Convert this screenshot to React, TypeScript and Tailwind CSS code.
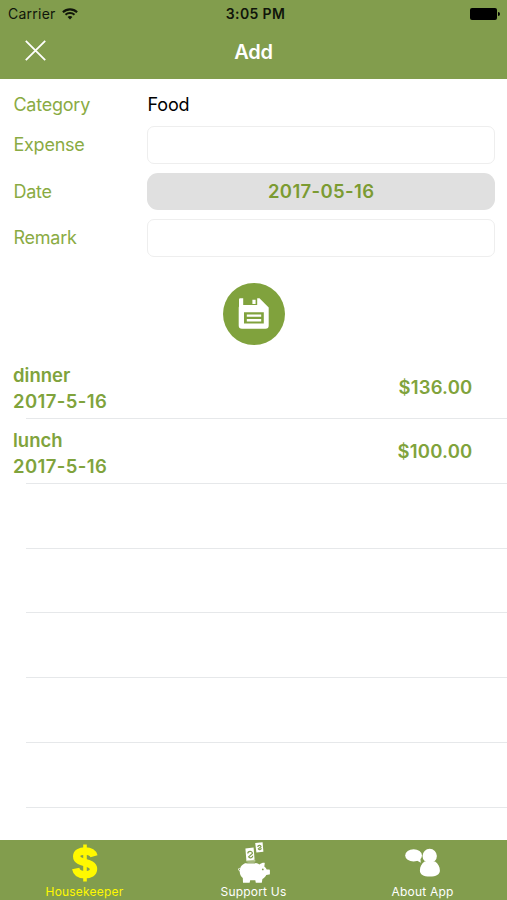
import React from "react";

type Entry = { name: string; date: string; amount: string };

const entries: (Entry | null)[] = [
  { name: "dinner", date: "2017-5-16", amount: "$136.00" },
  { name: "lunch", date: "2017-5-16", amount: "$100.00" },
  null,
  null,
  null,
  null,
  null,
];

function WifiIcon() {
  return (
    <svg className="ml-[6px] h-[12px] w-[16px]" viewBox="0 0 16 12" fill="none" stroke="#10150a">
      <path d="M.9 4.2C4.8.4 11.2.4 15.1 4.2" strokeWidth="2.1" />
      <path d="M3.5 6.8c2.5-2.3 6.5-2.3 9 0" strokeWidth="2" />
      <path d="M5.6 9c1.3-1.2 3.5-1.2 4.8 0L8 11.5z" fill="#10150a" stroke="none" />
    </svg>
  );
}

function SaveIcon() {
  return (
    <svg className="h-[31px] w-[31px]" viewBox="0 0 31 31">
      <path
        fill="#fff"
        fillRule="evenodd"
        d="M2.2.3H5.2V7h14V.3h2.3L30.7 9.5V27.5Q30.7 30.7 27.5 30.7H4Q.7 30.7.7 27.5V9.5L1 8.5V1.5Q1 .3 2.2.3z M6 14.2h19.8v11.2H6z"
      />
      <path fill="#fff" d="M14.4 1.8h3.2v4.1h-3.2zM8.8 16.5h14.4v2.3H8.8zM8.8 21.1h14.4v2.3H8.8z" />
    </svg>
  );
}

function DollarIcon() {
  return (
    <svg className="mt-[2px] h-[38px] w-[26px]" viewBox="0 0 26 38" fill="none" stroke="#fff900">
      <path d="M13 .5v37" strokeWidth="3.6" />
      <path
        d="M22 12.2C21 8.7 17.7 7 13 7 8 7 4.7 8.8 4.7 12.2c0 8.3 16.8 4.5 16.8 12.8 0 3.8-3.5 5.8-8.5 5.8-5.3 0-8.5-2-9.3-6.3"
        strokeWidth="7.4"
      />
    </svg>
  );
}

function PiggyIcon() {
  return (
    <svg className="mt-[1px] h-[41px] w-[32px]" viewBox="0 0 32 41">
      <g fill="#fff">
        <path d="M7.4 6.6 15.6 5.4l1 12.4-8.2 1zM17.2.9 24.6.3l.8 9.4-7 .8z" />
        <path d="M1.8 28.5C2.2 23 6.4 20.6 12.5 20.6c3.9 0 6.7.5 8.9 1.9 1.7-1.3 3.4-1.8 5.4-1.6l-.5 3.5c1.3 1 2 2 2.4 3.2h2.4q.8 0 .8.9v3.2q0 .8-.8.9l-2.8.5c-.9 1.9-2.2 3-3.9 3.8l-.6 3.9h-6l-.5-2.6h-5.1L11.6 40.8H5l-.2-4.9C2.6 34 1.4 31.5 1.8 28.5z" />
      </g>
      <path d="M2.5 29.5C-.2 28.3.3 26 1.6 26.4" fill="none" stroke="#fff" strokeWidth="1" />
      <path d="M8.3 21h9" stroke="#829d4d" strokeWidth=".9" />
      <path d="M8.3 18.9h9" stroke="#dce6c6" strokeWidth="1" />
      <path d="M9.8 11.6c0-2.8 4.6-3 4.6-.2l-3.8 3.4c.8 1.8 4 1.2 4.2-1M19.8 5c0-2 3.2-2.2 3.2-.2l-2.7 2.1c.5 1.3 2.9.8 3-.8" fill="none" stroke="#829d4d" strokeWidth="1.2" />
      <circle cx="24.8" cy="27.4" r=".9" fill="#829d4d" />
    </svg>
  );
}

function PeopleIcon() {
  return (
    <svg className="mt-[2px] h-[30px] w-[36px]" viewBox="0 0 36 30">
      <g fill="#fff">
        <ellipse cx="8.6" cy="7.4" rx="8.4" ry="6.1" />
        <path d="m11 12 4.8 2.8-.6-5.5z" />
        <circle cx="24.7" cy="8" r="7.2" />
        <path d="M19.5 13.4h10.6c3 2 4.8 5.4 4.8 9 0 3.9-3.7 6.1-10.1 6.1s-9.9-2.2-9.9-6.1c0-3.6 1.7-7 4.6-9z" />
      </g>
    </svg>
  );
}

function Header() {
  return (
    <header className="h-[79px] shrink-0 bg-[#829d4d]">
      <div className="grid h-[27px] grid-cols-3 items-center pl-2 pr-[7px] text-[14px] text-[#10150a]">
        <div className="flex items-center tracking-[0.25px]">
          Carrier
          <WifiIcon />
        </div>
        <div className="pl-[3px] text-center text-[14px] font-semibold tracking-[0.35px]">3:05 PM</div>
        <div className="flex items-center justify-end">
          <span className="h-[12px] w-[27px] rounded-[2px] bg-black" />
          <span className="ml-px h-[4px] w-[2px] rounded-r-sm bg-black" />
        </div>
      </div>
      <div className="grid h-[50px] grid-cols-3 items-center">
        <svg className="mb-[3px] ml-[25px] h-[21px] w-[21px]" viewBox="0 0 21 21" stroke="#fff" strokeWidth="1.8">
          <path d="m.8.8 19.4 19.4M20.2.8.8 20.2" />
        </svg>
        <h1 className="text-center text-[20px] font-semibold tracking-[-0.2px] text-white">Add</h1>
      </div>
    </header>
  );
}

function Field({ label, children }: { label: string; children: React.ReactNode }) {
  return (
    <div className="flex h-[37px] items-center">
      <span className="w-[134px] shrink-0 text-[18px] tracking-[-0.22px] text-[#8aab43]">{label}</span>
      {children}
    </div>
  );
}

function Tab({ label, active, children }: { label: string; active?: boolean; children: React.ReactNode }) {
  return (
    <div className={`flex flex-col items-center ${active ? "text-[#fff900]" : "text-white"}`}>
      <div className="flex h-[44px] items-center justify-center">{children}</div>
      <span className="h-[16px] text-[12px] leading-[16px] tracking-[0.2px]">{label}</span>
    </div>
  );
}

export default function App() {
  return (
    <div className="flex h-[900px] w-[507px] flex-col overflow-hidden bg-white font-['Inter',sans-serif]">
      <Header />
      <main className="min-h-0 flex-1 overflow-hidden">
        <div className="pl-[13.4px] pr-3">
          <div className="flex h-[47px] items-center pt-1 text-[18px]">
            <span className="w-[134px] tracking-[-0.22px] text-[#8aab43]">Category</span>
            <span className="tracking-[-0.1px] text-black">Food</span>
          </div>
          <div className="flex flex-col gap-[9.5px]">
            <Field label="Expense">
              <input aria-label="Expense" className="h-[38px] min-w-0 flex-1 rounded-[7px] border border-[#eeeeee] bg-white px-2 outline-none" />
            </Field>
            <Field label="Date">
              <button className="h-[37px] flex-1 rounded-[11px] bg-[#e0e0e0] pt-[2px] text-[18.5px] font-semibold tracking-[0.35px] text-[#7b9b32]">2017-05-16</button>
            </Field>
            <Field label="Remark">
              <input aria-label="Remark" className="h-[38px] min-w-0 flex-1 rounded-[7px] border border-[#eeeeee] bg-white px-2 outline-none" />
            </Field>
          </div>
        </div>
        <div className="flex h-[98.25px] items-end justify-center pb-[9.75px]">
          <button aria-label="Save" className="flex size-[62px] items-center justify-center rounded-full bg-[#80a23d]">
            <SaveIcon />
          </button>
        </div>
        <ul className="text-[18.5px] font-semibold text-[#80a33c]">
          {entries.map((entry, i) => (
            <li key={i} className="h-[64.75px]">
              <div className="flex h-[63.75px] items-center justify-between pl-[13px] pr-[34.5px]">
                {entry && (
                  <>
                    <div className="pt-[3.5px] leading-[26px]">
                      <div>{entry.name}</div>
                      <div className="tracking-[0.4px]">{entry.date}</div>
                    </div>
                    <div className="pt-[2.5px] tracking-[0.2px]">{entry.amount}</div>
                  </>
                )}
              </div>
              <div className="ml-[26px] h-px bg-[#e6e8ea]" />
            </li>
          ))}
        </ul>
      </main>
      <nav className="grid h-[60px] shrink-0 grid-cols-3 bg-[#829d4d]">
        <Tab label="Housekeeper" active><DollarIcon /></Tab>
        <Tab label="Support Us"><PiggyIcon /></Tab>
        <Tab label="About App"><PeopleIcon /></Tab>
      </nav>
    </div>
  );
}
